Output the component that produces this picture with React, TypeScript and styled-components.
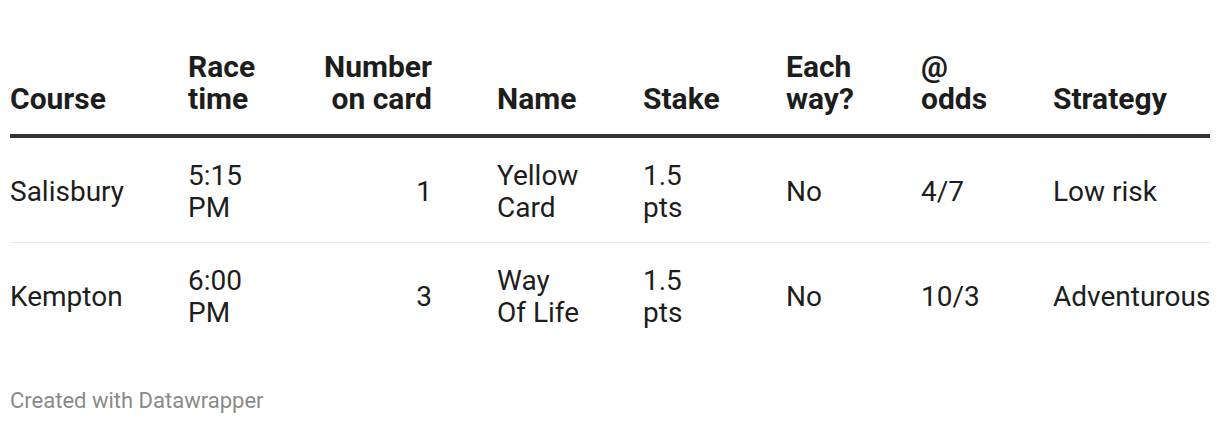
import styled, { createGlobalStyle } from "styled-components";

const GlobalStyle = createGlobalStyle`
   body {
      margin: 0;
      background: #ffffff;
      font-family: Roboto, "Liberation Sans", Arial, sans-serif;
      color: #1d1d1d;
   }
`;

type Column = {
   label: string;
   width: number;
   align: "left" | "right";
   gap: number;
};

const columns: Column[] = [
   { label: "Course", width: 178, align: "left", gap: 0 },
   { label: "Race\ntime", width: 112, align: "left", gap: 0 },
   { label: "Number\non card", width: 197, align: "right", gap: 65 },
   { label: "Name", width: 146, align: "left", gap: 0 },
   { label: "Stake", width: 143, align: "left", gap: 0 },
   { label: "Each\nway?", width: 135, align: "left", gap: 0 },
   { label: "@\nodds", width: 132, align: "left", gap: 0 },
   { label: "Strategy", width: 157, align: "left", gap: 0 },
];

const rows: string[][] = [
   ["Salisbury", "5:15\nPM", "1", "Yellow\nCard", "1.5\npts", "No", "4/7", "Low risk"],
   ["Kempton", "6:00\nPM", "3", "Way\nOf Life", "1.5\npts", "No", "10/3", "Adventurous"],
];

export default function App() {
   return (
      <>
         <GlobalStyle />
         <Page>
            <Table>
               <colgroup>
                  {columns.map((col) => (
                     <col key={col.label} style={{ width: col.width }} />
                  ))}
               </colgroup>
               <thead>
                  <tr>
                     {columns.map((col) => (
                        <HeadCell key={col.label} $align={col.align} $gap={col.gap}>
                           {col.label}
                        </HeadCell>
                     ))}
                  </tr>
               </thead>
               <tbody>
                  {rows.map((row, i) => (
                     <BodyRow key={i} $last={i === rows.length - 1}>
                        {row.map((value, j) => (
                           <BodyCell key={j} $align={columns[j].align} $gap={columns[j].gap}>
                              {value}
                           </BodyCell>
                        ))}
                     </BodyRow>
                  ))}
               </tbody>
            </Table>
            <Footer>Created with Datawrapper</Footer>
         </Page>
      </>
   );
}

const Page = styled.div`
   padding: 39px 10px 0 10px;
   width: 1200px;
`;

const Table = styled.table`
   width: 1200px;
   table-layout: fixed;
   border-collapse: collapse;
   border-spacing: 0;
`;

const HeadCell = styled.th<{ $align: string; $gap: number }>`
   padding: 12px ${(p) => p.$gap}px 19px 0;
   text-align: ${(p) => p.$align};
   vertical-align: bottom;
   white-space: pre-line;
   font-size: 30px;
   line-height: 32px;
   font-weight: 700;
   color: #1d1d1d;
   border-bottom: 4px solid #333333;
`;

const BodyRow = styled.tr<{ $last: boolean }>`
   border-bottom: ${(p) => (p.$last ? "none" : "1px solid #ebebeb")};
`;

const BodyCell = styled.td<{ $align: string; $gap: number }>`
   padding: 22px ${(p) => p.$gap}px 18px 0;
   text-align: ${(p) => p.$align};
   vertical-align: middle;
   white-space: pre-line;
   font-size: 28px;
   line-height: 32px;
   color: #1d1d1d;
`;

const Footer = styled.div`
   margin-top: 41px;
   font-size: 22px;
   line-height: 26px;
   color: #8a8a8a;
`;
